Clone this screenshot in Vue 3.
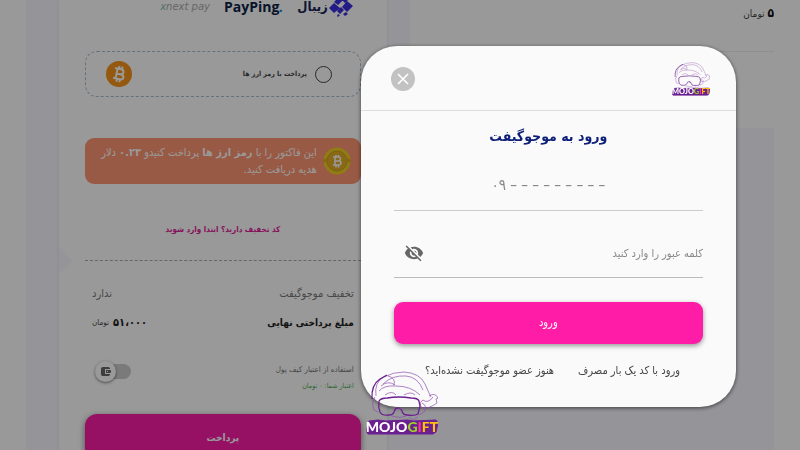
<template>
    <div class="page" dir="rtl">
        <main class="content">
            <section class="summary">
                <p class="price"><strong>۵</strong> تومان</p>
            </section>

            <section class="invoice">
                <div class="gateways">
                    <span class="zibal">
                        <svg width="24" height="20" viewBox="0 0 24 20" fill="#3b2fe0">
                            <path d="M10 0l4 3-5 5-4-3zM17 0l3 2-4 4-3-3zM18 4l6 5-6 6-5-5zM5 6l6 5-6 5-5-5zM12 10l3 3-4 4-3-3zM17 15l2 2-3 2-2-2zM9 17l2 1-2 2-1-1z" />
                        </svg>
                        <b>زیبال</b>
                    </span>
                    <span class="payping" dir="ltr">PayPing<i>.</i></span>
                    <span class="nextpay" dir="ltr"><i>x</i>next pay</span>
                </div>

                <label class="crypto">
                    <input v-model="method" type="radio" name="method" value="crypto" />
                    <span>پرداخت با رمز ارز ها</span>
                    <svg class="coin" viewBox="0 0 26 26">
                        <circle cx="13" cy="13" r="13" fill="#f7931a" />
                        <g transform="rotate(12 13 13)" fill="none" stroke="#fff" stroke-width="2">
                            <path d="M8 8h6q3 0 3 2.500t-3 2.500h-4h5q3 0 3 2.500t-3 2.500H8M10.500 8v10M12 5v3M15 5v3M12 18v3M15 18v3" />
                        </g>
                    </svg>
                </label>

                <div class="banner">
                    <svg class="gold" viewBox="0 0 28 28">
                        <circle cx="14" cy="14" r="13.500" fill="#f0cf22" />
                        <circle cx="14" cy="14" r="10" fill="#e5ad25" stroke="#d0a01b" />
                        <path d="M0 13l4-2 1 3-4 2zM28 13l-4-2-1 3 4 2z" fill="#dcae1b" />
                        <path d="M10 10h5q2.500 0 2.500 2t-2.500 2h-3h3.500q2.500 0 2.500 2t-2.500 2H10M12 10v8M13 8v2M15.500 8v2M13 18v2.500M15.500 18v2.500" fill="none" stroke="#fff" stroke-width="1.600" />
                    </svg>
                    <p>این فاکتور را با <b>رمز ارز ها</b> پرداخت کنیدو <b>۰.۲۳</b> دلار هدیه دریافت کنید.</p>
                </div>

                <a class="discount-link" href="#">کد تخفیف دارید؟ ابتدا وارد شوید</a>

                <div class="divider"></div>

                <div class="row muted">
                    <span>تخفیف موجوگیفت</span>
                    <span>ندارد</span>
                </div>
                <div class="row total">
                    <strong>مبلغ پرداختی نهایی</strong>
                    <span class="amount"><strong>۵۱،۰۰۰</strong> تومان</span>
                </div>

                <div class="wallet">
                    <label for="wallet">
                        <span>استفاده از اعتبار کیف پول</span>
                        <small>اعتبار شما: ۰ تومان</small>
                    </label>
                    <span class="switch">
                        <input id="wallet" v-model="useWallet" type="checkbox" />
                        <svg viewBox="0 0 11 11">
                            <path d="M1 1h9v2H5v5h5v2H1z" fill="#666" />
                            <path d="M6 4h5v3H6z" fill="#666" />
                            <path d="M7 5h1v1H7z" fill="#fff" />
                        </svg>
                    </span>
                </div>

                <button class="pay" type="button">پرداخت</button>
            </section>
        </main>

        <div class="overlay">
            <form class="modal" @submit.prevent>
                <header>
                    <svg class="logo" viewBox="0 0 72 64">
                        <symbol id="mojo" viewBox="0 0 72 64">
                            <g class="face">
                                <path d="M10 25Q8 11 18 6q9-5 20-5 16 1 21 12 3 7 6 13" />
                                <path d="M13 20Q18 14 30 15q15 0 24 9M17 13q9-9 23-8 12 1 17 14M22 5q8 2 6 9M15 15q7-6 14-1" />
                                <path d="M63 25q6-4 9 2l-2 1 1 4q-8 6-15 5-4-5 1-8 5 4 10-3" />
                                <path class="bold" d="M13 30q2-3 8-3 12-2 24 0 7 0 8 3l1 5-2 8q-3 2-11 1-4 0-5-4-2-4-4-3-3 0-4 4-1 3-5 3-7 1-9-3-2-5-1-11z" />
                                <path class="bold" d="M6 28Q5 14 14 8l7-4" />
                                <path d="M9 26q-4 5-1 13l4 2M56 32q6 3 2 9l-5 3M19 24q7-5 11 0M38 24q7-4 11 0M33 39q2-4 4 0M26 45q8 3 14 0M43 46l4 3 5-3" />
                            </g>
                            <path class="plate" d="M3 50l9-1 8 1 22-1 5 1 23-1 2 3-2 9-3 2H2l-2-3z" />
                            <text class="word" x="36" y="61" text-anchor="middle">MOJO<tspan fill="#9bd02b">G</tspan><tspan fill="#ff2fa0">I</tspan><tspan fill="#ffc20e">FT</tspan></text>
                        </symbol>
                        <use href="#mojo" />
                    </svg>
                    <button class="close" type="button" aria-label="بستن">
                        <svg viewBox="0 0 24 24"><path d="M7 7l10 10M17 7L7 17" /></svg>
                    </button>
                </header>
                <div class="body">
                    <h1>ورود به موجوگیفت</h1>
                    <input v-model="phone" class="phone" type="tel" dir="ltr" aria-label="شماره موبایل" placeholder="۰۹ – – – – – – – – –" />
                    <div class="password">
                        <input v-model="password" type="password" aria-label="کلمه عبور" placeholder="کلمه عبور را وارد کنید" />
                        <button type="button" aria-label="نمایش کلمه عبور">
                            <svg viewBox="0 0 24 24">
                                <path d="M12 7c2.76 0 5 2.24 5 5 0 .65-.13 1.26-.36 1.83l2.92 2.92c1.51-1.26 2.7-2.89 3.43-4.75-1.73-4.39-6-7.5-11-7.5-1.4 0-2.74.25-3.98.7l2.16 2.16C10.74 7.13 11.35 7 12 7zM2 4.27l2.28 2.28.46.46C3.08 8.3 1.78 10.02 1 12c1.73 4.39 6 7.5 11 7.5 1.55 0 3.03-.3 4.38-.84l.42.42L19.73 22 21 20.73 3.27 3 2 4.27zM7.53 9.8l1.55 1.55c-.05.21-.08.43-.08.65 0 1.66 1.34 3 3 3 .22 0 .44-.03.65-.08l1.55 1.55c-.67.33-1.41.53-2.2.53-2.76 0-5-2.24-5-5 0-.79.2-1.53.53-2.2zm4.31-.78l3.15 3.15.02-.16c0-1.66-1.34-3-3-3l-.17.01z" />
                            </svg>
                        </button>
                    </div>
                    <button class="login" type="submit">ورود</button>
                    <nav>
                        <a href="#">ورود با کد یک بار مصرف</a>
                        <a href="#">هنوز عضو موجوگیفت نشده‌اید؟</a>
                    </nav>
                </div>
            </form>
        </div>

        <svg class="loader" viewBox="0 0 72 64"><use href="#mojo" /></svg>
    </div>
</template>

<script setup>
    import { ref } from 'vue';

    const method = ref('');
    const useWallet = ref(false);
    const phone = ref('');
    const password = ref('');
</script>

<style>
    body {
        margin: 0;
        overflow: hidden;
        background: #fff;
    }
</style>

<style scoped>
    .page,
    .page input,
    .page button {
        font-family: "DejaVu Sans Condensed", "DejaVu Sans", sans-serif;
    }

    .page {
        color: #444;
        font-size: 10px;
        line-height: 16px;
    }

    .page * {
        box-sizing: border-box;
    }

    p, h1 {
        margin: 0;
    }

    a {
        text-decoration: none;
    }

    button {
        border: 0;
        padding: 0;
        cursor: pointer;
    }

    .content {
        display: grid;
        grid-template-columns: 10fr 9fr;
        column-gap: 23px;
        align-items: start;
        margin: 0 26px;
        padding-left: 33px;
        background: #f7f7ff;
        height: 100vh;
        overflow: hidden;
    }

    .summary {
        height: 128px;
        background: #fff;
    }

    .price {
        height: 52px;
        padding-top: 5px;
        border-bottom: 1px solid #eee;
        font-size: 10px;
    }

        .price strong {
            font-size: 12px;
            color: #111;
        }

    .invoice {
        position: relative;
        background: #fff;
        padding: 0 26px;
        box-shadow: 0 0 4px rgba(0,0,0,0.08);
    }

        .invoice::before {
            content: "";
            position: absolute;
            left: 0;
            top: 248px;
            border: solid transparent;
            border-width: 13px 0 13px 13px;
            border-left-color: #f7f7ff;
        }

    .gateways {
        display: flex;
        align-items: center;
        gap: 14px;
        height: 13px;
        padding-right: 8px;
        margin-bottom: 38px;
    }

    .zibal {
        display: flex;
        align-items: center;
        gap: 1px;
        color: #172554;
        font-size: 13px;
    }

    .payping {
        color: #0d2347;
        font: bold 14px/13px "Open Sans", sans-serif;
    }

        .payping i {
            color: #1787e0;
        }

    .nextpay {
        color: #aaa;
        font: italic 10px/13px "DejaVu Sans", sans-serif;
    }

        .nextpay i {
            color: #7fc0bd;
        }

    .crypto {
        display: flex;
        align-items: center;
        gap: 8px;
        height: 46px;
        padding: 0 28px 0 20px;
        border: 1px dashed #a3bed6;
        border-radius: 12px;
        font-size: 7px;
        font-weight: bold;
    }

        .crypto input {
            appearance: none;
            width: 17px;
            height: 17px;
            margin: 0;
            border: 1px solid #444;
            border-radius: 50%;
        }

    .coin {
        width: 26px;
        height: 26px;
        margin-right: auto;
    }

    .banner {
        display: flex;
        align-items: center;
        gap: 6px;
        height: 46px;
        margin-top: 41px;
        padding: 0 10px 0 8px;
        border-radius: 9px;
        background: #ff9673;
        color: #fff;
        font-size: 11px;
        line-height: 17px;
    }

    .gold {
        flex: none;
        width: 28px;
        height: 28px;
    }

    .discount-link {
        display: block;
        margin-top: 38px;
        color: #e01c98;
        font-size: 8px;
        font-weight: bold;
        text-align: center;
    }

    .divider {
        margin: 22px 0 24px;
        border-top: 1px dashed #aaa;
    }

    .row {
        display: flex;
        align-items: center;
        justify-content: space-between;
        height: 18px;
        padding: 0 7px;
        margin-bottom: 11px;
    }

    .muted {
        color: #777;
        font-size: 11px;
    }

    .total strong {
        color: #222;
        font-size: 10px;
    }

    .total .amount {
        display: flex;
        gap: 4px;
        font-size: 8px;
    }

        .total .amount strong {
            font-size: 11px;
        }

    .wallet {
        display: flex;
        align-items: center;
        justify-content: space-between;
        margin-top: 28px;
        padding: 0 7px 0 10px;
        font-size: 8px;
        color: #777;
    }

        .wallet span, .wallet small {
            display: block;
        }

        .wallet small {
            font-size: 7px;
            color: #4caf50;
        }

    .wallet .switch {
        display: flex;
        align-items: center;
        position: relative;
        width: 36px;
        height: 22px;
        margin-bottom: 14px;
    }

    .switch input {
        appearance: none;
        width: 32px;
        height: 15px;
        margin: 0;
        border-radius: 8px;
        background: #ccc;
    }

    .switch svg {
        position: absolute;
        left: 0;
        width: 21px;
        height: 21px;
        padding: 5px;
        border-radius: 50%;
        background: #fff;
        box-shadow: 0 1px 3px rgba(0,0,0,0.5);
        pointer-events: none;
    }

    .pay {
        display: block;
        width: 100%;
        height: 46px;
        margin-top: 18px;
        border-radius: 12px;
        background: #fa1da7;
        color: #fff;
        font-size: 10px;
        font-weight: bold;
        box-shadow: 0 2px 6px rgba(0,0,0,0.5);
    }

    .overlay {
        position: fixed;
        inset: 0;
        display: flex;
        align-items: center;
        padding: 2px 8% 0 0;
        background: rgba(0,0,0,0.4);
    }

    .modal {
        width: 51%;
        border-radius: 36px;
        background: #fafafa;
        box-shadow: 0 1px 4px rgba(0,0,0,0.6);
    }

        .modal header {
            display: flex;
            align-items: center;
            justify-content: space-between;
            height: 65px;
            padding: 2px 26px 0 30px;
            border-bottom: 1px solid #ddd;
        }

    .logo {
        width: 38px;
        height: 34px;
    }

    .face {
        fill: none;
        stroke: #8e4fae;
        stroke-width: 0.7;
    }

        .face .bold {
            stroke: #6b2090;
            stroke-width: 1.3;
        }

    .plate {
        fill: #6b2090;
        stroke: #6b2090;
        stroke-width: 1;
        stroke-linejoin: round;
    }

    .word {
        font: 900 14px Lato, sans-serif;
        fill: #fff;
        direction: ltr;
    }

    .close {
        width: 24px;
        height: 24px;
        border-radius: 50%;
        background: #c2c2c2;
    }

        .close svg {
            display: block;
            stroke: #fff;
            stroke-width: 1.6;
        }

    .body {
        padding: 12px 33px 28px;
    }

    h1 {
        color: #0d1f78;
        font-size: 14px;
        line-height: 26px;
        text-align: center;
    }

    .body input {
        width: 100%;
        border: 0;
        outline: 0;
        background: none;
    }

        .body input::placeholder {
            color: #888;
            opacity: 1;
        }

    .body .phone {
        display: block;
        height: 50px;
        margin-top: 12px;
        border-bottom: 1px solid #ccc;
        font-size: 15px;
        text-align: center;
    }

    .password {
        display: flex;
        align-items: center;
        height: 48px;
        margin-top: 19px;
        padding-left: 10px;
        border-bottom: 1px solid #bbb;
    }

        .password input {
            flex: 1;
            padding: 0;
            font-size: 11px;
        }

        .password button {
            width: 20px;
            height: 20px;
            background: none;
        }

        .password svg {
            display: block;
            fill: #666;
        }

    .login {
        width: 100%;
        height: 42px;
        margin-top: 24px;
        border-radius: 9px;
        background: #ff1da8;
        color: #fff;
        font-size: 11px;
        box-shadow: 0 2px 5px rgba(0,0,0,0.4);
    }

    nav {
        display: flex;
        gap: 24px;
        margin-top: 19px;
        padding-right: 23px;
    }

        nav a {
            color: #444;
            font-size: 11px;
            white-space: nowrap;
        }

    .loader {
        position: fixed;
        left: 366px;
        bottom: 15px;
        width: 72px;
        height: 64px;
    }
</style>
